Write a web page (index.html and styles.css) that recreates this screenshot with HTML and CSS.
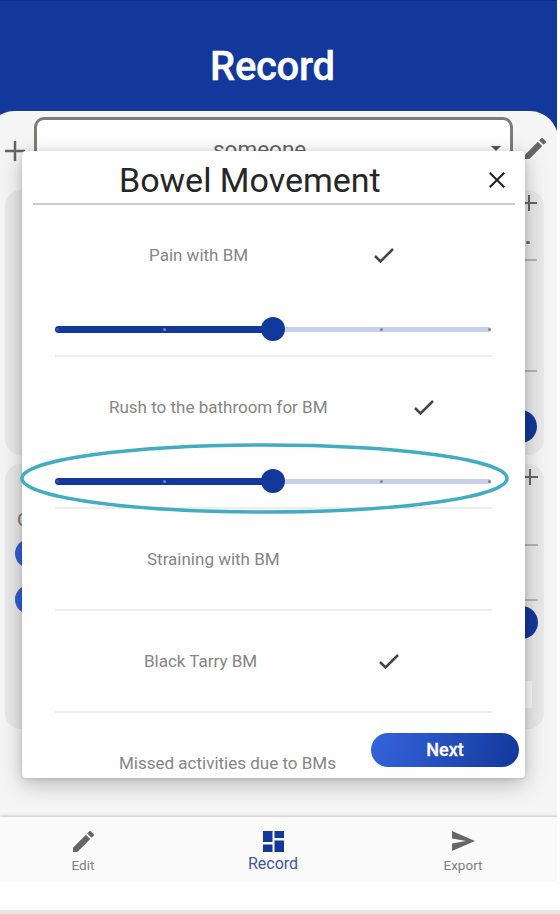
FILE: index.html
```html
<!DOCTYPE html>
<html lang="en">
<head>
<meta charset="utf-8">
<title>Record</title>
<link rel="stylesheet" href="styles.css">
</head>
<body>
<div class="app">
  <header class="header"><h1>Record</h1></header>
  <main class="sheet">
    <div class="profile">
      <svg class="plus" viewBox="0 0 20 20"><path d="M10 0v20M0 10h20"/></svg>
      <div class="select"><span>someone</span><svg class="caret" viewBox="0 0 10 5"><path d="M0 0h10L5 5z"/></svg></div>
      <svg class="pencil" viewBox="3 3 18 18"><path d="M3 17.25V21h3.75L17.81 9.94l-3.75-3.75L3 17.25zM20.71 7.04a1 1 0 0 0 0-1.41l-2.34-2.34a1 1 0 0 0-1.41 0l-1.83 1.83 3.75 3.75 1.83-1.83z"/></svg>
    </div>
    <section class="card first">
      <svg class="plus small" viewBox="0 0 16 16"><path d="M8 0v16M0 8h16"/></svg>
      <span class="tick-end"></span>
      <hr class="field"><hr class="field second">
      <div class="pill end"></div>
    </section>
    <section class="card last">
      <svg class="plus small" viewBox="0 0 16 16"><path d="M8 0v16M0 8h16"/></svg>
      <div class="columns">
        <div class="choices"><span class="initial">C</span><i class="pill start"></i><i class="pill start"></i></div>
        <div class="fields"><hr class="field"><hr class="field second"><div class="pill end"></div><div class="box"></div></div>
      </div>
    </section>
  </main>
  <nav class="nav">
    <a class="tab edit"><svg viewBox="3 3 18 18"><path d="M3 17.25V21h3.75L17.81 9.94l-3.75-3.75L3 17.25zM20.71 7.04a1 1 0 0 0 0-1.41l-2.34-2.34a1 1 0 0 0-1.41 0l-1.83 1.83 3.75 3.75 1.83-1.83z"/></svg><span>Edit</span></a>
    <a class="tab active"><svg viewBox="0 0 21 21"><path d="M0 0h9.500v11H0zM11.500 0H21v7h-9.500zM0 13.500h9.500V21H0zM11.500 9.500H21V21h-9.500z"/></svg><span>Record</span></a>
    <a class="tab export"><svg viewBox="0 0 23 20"><path d="M0 0L23 10L0 20V12.500L14 10L0 7.500z"/></svg><span>Export</span></a>
  </nav>

  <div class="modal">
    <div class="modal-head">
      <h2>Bowel Movement</h2>
      <svg class="close" viewBox="0 0 16 16"><path d="M.7.7l14.600 14.600M15.300.7L.7 15.300"/></svg>
    </div>
    <div class="rows">
      <div class="row">
        <div class="question pain"><span>Pain with BM</span><svg class="check" viewBox="0 0 20 15"><path d="M1 8l5.500 5.500L19 1"/></svg></div>
        <div class="slider"><b></b><em></em><i></i></div>
      </div>
      <div class="row">
        <div class="question rush"><span>Rush to the bathroom for BM</span><svg class="check" viewBox="0 0 20 15"><path d="M1 8l5.500 5.500L19 1"/></svg></div>
        <div class="slider"><b></b><em></em><i></i></div>
      </div>
      <div class="row"><div class="question straining"><span>Straining with BM</span></div></div>
      <div class="row"><div class="question tarry"><span>Black Tarry BM</span><svg class="check" viewBox="0 0 20 15"><path d="M1 8l5.500 5.500L19 1"/></svg></div></div>
      <div class="row"><div class="question missed"><span>Missed activities due to BMs</span></div></div>
    </div>
    <button class="next">Next</button>
  </div>
  <svg class="highlight" viewBox="0 0 490 74"><ellipse cx="244.500" cy="37.500" rx="242.500" ry="33.500"/></svg>
</div>
</body>
</html>
```
FILE: styles.css
```css
* { box-sizing: border-box; }
body { margin: 0; height: 914px; overflow: hidden; background: #fff; font-family: Roboto, sans-serif; }
body::after { content: ""; display: block; height: 4px; background: #e6e6e6; }
svg { display: block; flex: none; }
.app { position: relative; width: 557px; height: 910px; overflow: hidden; display: flex; flex-direction: column; }
.header { height: 140px; flex: none; background: #12389b; border-top: 1px solid #0d2f8a; padding: 43px 0 0 210px; }
h1 { margin: 0; font-size: 40px; line-height: 46px; font-weight: 500; color: #fff; letter-spacing: -.3px; -webkit-text-stroke: .4px #fff; }
.sheet { margin: -29px 0 0 -12px; width: 570px; height: 706px; flex: none; background: #f5f5f5; border-radius: 26px 28px 0 0; padding: 6px 0 0 17px; }
.profile { display: flex; height: 73px; width: 552px; }
.plus { width: 20px; height: 20px; margin: 24px 0 0; stroke: #666; stroke-width: 2.5; fill: none; }
.select { width: 479px; height: 60px; margin-left: 9px; border: 3px solid #7b7d79; border-radius: 10px; background: #fff; display: flex; justify-content: space-between; padding: 17px 9px 0 176px; color: #666; font-size: 22.500px; line-height: 25px; }
.caret { width: 10px; height: 5px; margin-top: 9px; fill: #555; }
.pencil { width: 21px; height: 21px; margin: 21px 0 0 12px; fill: #666; }
.card { width: 539px; height: 265px; margin-bottom: 9px; background: #e9e9e9; border-radius: 16px; display: flex; flex-direction: column; align-items: flex-end; padding: 5px 7px 0 10px; }
.plus.small { width: 16px; height: 16px; margin: 0; stroke-width: 2; }
.tick-end { width: 4px; height: 3px; margin: 30px 7px 0 0; border-radius: 2px; background: #666; }
.field { width: 30px; height: 2px; margin: 15px 0 0; border: 0; background: #b6b6b6; }
.card.first .field.second { margin-top: 109px; }
.pill.end { width: 40px; height: 33px; border-radius: 17px; background: #12389b; }
.card.first .pill { margin-top: 38px; }
.card.last { padding-right: 6px; }
.columns { width: 100%; display: flex; justify-content: space-between; }
.choices { display: flex; flex-direction: column; gap: 17px; padding-top: 25px; }
.initial { font-size: 19px; line-height: 20px; color: #777; margin: 0 0 -8px 2px; }
.pill.start { width: 80px; height: 29px; border-radius: 15px; background: #315fd3; }
.fields { display: flex; flex-direction: column; align-items: flex-end; padding-top: 44px; }
.fields .field { margin: 15px 0 0; }
.fields .field.second { margin-top: 53px; }
.fields .pill { margin-top: 5px; }
.box { width: 40px; height: 27px; margin: 42px 6px 0 0; background: #fafafa; }

.nav { position: relative; z-index: 3; height: 63px; flex: none; background: #fafafa; display: flex; box-shadow: 0 -1px 3px rgba(0,0,0,.2); }
.tab { display: flex; flex-direction: column; align-items: center; width: 190px; padding-top: 14px; color: #808080; fill: #666; font-size: 13.500px; line-height: 16px; }
.tab svg { width: 21px; height: 21px; }
.tab span { margin-top: 5px; }
.tab.edit { width: 166px; }
.tab.active { width: 214px; color: #3b56a9; fill: #12389b; font-size: 16px; }
.tab.active span { margin-top: 4px; }
.tab.export { width: 166px; }
.tab.export svg { width: 23px; height: 20px; margin-bottom: 1px; }

.modal { position: absolute; z-index: 2; left: 22px; top: 151px; width: 503px; height: 627px; background: #fefefe; border-radius: 4px; box-shadow: 0 6px 22px rgba(0,0,0,.25), 0 1px 5px rgba(0,0,0,.12); }
.modal-head { display: flex; justify-content: space-between; margin: 0 10px 0 11px; height: 54px; border-bottom: 2px solid #ccc; padding: 9px 10px 0 86px; }
h2 { margin: 0; font-size: 34px; line-height: 40px; font-weight: 400; color: #262626; white-space: nowrap; }
.close { width: 16px; height: 16px; margin-top: 12px; stroke: #222; stroke-width: 2; }
.rows { padding: 0 33px; }
.row { border-bottom: 2px solid #ededed; padding-bottom: 39px; }
.row:last-child { border: 0; padding-bottom: 0; }
.question { display: flex; align-items: center; height: 22px; color: #858585; font-size: 17px; white-space: nowrap; }
.row::before { content: ""; display: block; height: 39px; }
.check { width: 20px; height: 15px; fill: none; stroke: #444; stroke-width: 2.5; }
.pain { padding-left: 94px; gap: 126px; }
.rush { padding-left: 54px; gap: 86px; }
.straining { padding-left: 92px; }
.tarry { padding-left: 89px; gap: 122px; }
.missed { padding-left: 64px; }
.slider { position: relative; display: flex; align-items: center; height: 24px; margin: 51px 0 -25px; }
.slider::before { content: ""; width: 218px; height: 7px; border-radius: 4px; background: #12389b; }
.slider::after { content: ""; width: 218px; height: 5px; border-radius: 0 3px 3px 0; background: #c9d0eb; }
.slider b { position: absolute; left: 206px; width: 24px; height: 24px; border-radius: 50%; background: #12389b; }
.slider em, .slider i { position: absolute; width: 3px; height: 3px; border-radius: 50%; background: #7f8199; }
.slider em { left: 108px; box-shadow: 217px 0 #7f8199; background: #6f86c4; }
.slider i { right: 1px; box-shadow: -432px 0 #475580; }
.next { position: absolute; right: 6px; bottom: 11px; width: 148px; height: 34px; padding: 0; border: 0; border-radius: 17px; background: linear-gradient(105deg, #3565dc, #12389b); color: #fff; font: 500 18px/34px Roboto, sans-serif; -webkit-text-stroke: .3px #fff; }
.highlight { position: absolute; z-index: 4; left: 20px; top: 441px; width: 490px; height: 74px; fill: none; stroke: #42acc0; stroke-width: 3.500; }
```
